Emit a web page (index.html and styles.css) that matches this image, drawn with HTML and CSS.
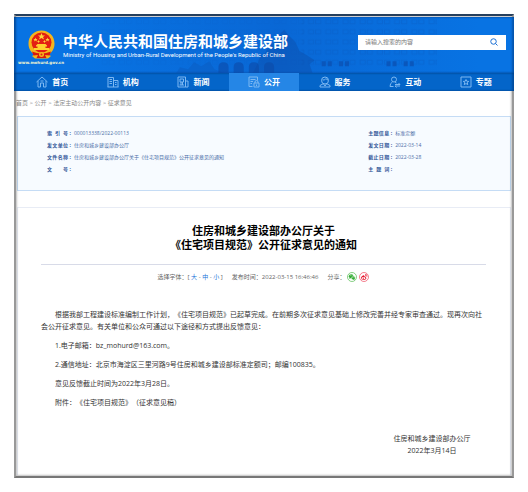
FILE: index.html
```html
<!DOCTYPE html>
<html lang="zh-CN">
<head>
    <meta charset="UTF-8">
    <meta name="viewport" content="width=device-width, initial-scale=1.0">
    <title>中华人民共和国住房和城乡建设部</title>
    <link rel="stylesheet" href="styles.css">
</head>
<body>
  <div class="page">
    <header class="header">
      <svg class="header-bg" viewBox="0 0 494 56" preserveAspectRatio="xMaxYMid slice" aria-hidden="true">
        <defs>
          <pattern id="windows" width="17" height="10" patternUnits="userSpaceOnUse">
            <path d="M2 3h5v4h-5zM9 3h5v4h-5z" fill="none" stroke="#0a55b8" stroke-width="1"/>
          </pattern>
          <linearGradient id="fade" x1="0" x2="1">
            <stop offset="0" stop-color="#0a5cc8" stop-opacity="0"/>
            <stop offset="0.5" stop-color="#0a5cc8" stop-opacity="0.5"/>
            <stop offset="1" stop-color="#0a5cc8" stop-opacity="0"/>
          </linearGradient>
        </defs>
        <rect x="60" width="400" height="56" fill="url(#fade)"/>
        <rect x="85" width="205" height="50" fill="url(#windows)" opacity="0.12"/>
        <rect x="284" y="2" width="134" height="50" fill="url(#windows)" opacity="0.3"/>
        <path d="M202 56v-6q0-5 5-5t5 5v6zM217 56v-6q0-5 5-5t5 5v6zM232 56v-6q0-5 5-5t5 5v6zM247 56v-6q0-5 5-5t5 5v6z" fill="#0b4aa8" opacity="0.6"/>
        <path d="M304 44h4v5h-4zM310 44h4v5h-4zM321 44h4v5h-4zM327 44h4v5h-4zM368 44h4v5h-4zM374 44h4v5h-4zM385 44h4v5h-4zM391 44h4v5h-4z" fill="#0b4aa8" opacity="0.6"/>
        <path d="M236 56l4-8 3-9 5-3 4-7 6-4 5-8 4-4 4 5 7 7 4 9 7 4 8 5-5 4 3 9z" fill="#0d4ba6" opacity="0.4"/>
        <path d="M160 56l4-6 8 2 6-7 7 4 8-5 5 8 10 4z" fill="#0d4ba6" opacity="0.25"/>
      </svg>
      <a class="brand" href="#">
        <span class="logo">
          <svg class="emblem" viewBox="0 0 54 58" aria-hidden="true">
            <path d="M27 1C12 1 1 12 1 27c0 11 5 18 12 22l-5 3 6 5h26l6-5-5-3c7-4 12-11 12-22C53 12 42 1 27 1z" fill="#f5b51c"/>
            <circle cx="27" cy="25" r="20" fill="#e31e12"/>
            <path d="M27 6l2 5h5l-4 3 2 5-5-3-5 3 2-5-4-3h5zM15 15l1 3h3l-2 2 1 3-3-2-3 2 1-3-2-2h3zM39 15l1 3h3l-2 2 1 3-3-2-3 2 1-3-2-2h3zM21 20l1 2h2l-2 2-1 2-1-2-2-2h2zM33 20l1 2h2l-2 2-1 2-1-2-2-2h2z" fill="#ffd83a"/>
            <path d="M16 31l3-3h16l3 3v2h-3v3h7v4H12v-4h7v-3h-3z" fill="#ffd02e"/>
            <path d="M8 43q19 8 38 0l-3 8-9-1 3 6H17l3-6-9 1z" fill="#d9180e"/>
            <circle cx="27" cy="49" r="5" fill="#f5b51c"/>
            <circle cx="27" cy="49" r="2" fill="#e31e12"/>
          </svg>
          <span class="domain">www.mohurd.gov.cn</span>
        </span>
        <span class="names">
          <span class="name-zh">中华人民共和国住房和城乡建设部</span>
          <span class="name-en">Ministry of Housing and Urban-Rural Development of the People's Republic of China</span>
        </span>
      </a>
      <form class="search">
        <input type="text" placeholder="请输入搜索的内容" aria-label="搜索">
        <button type="button" aria-label="搜索">
          <svg viewBox="0 0 16 16" fill="none" stroke="#1a6fd4" stroke-width="2"><circle cx="7" cy="7" r="5.5"/><path d="M11 11l4 4"/></svg>
        </button>
      </form>
    </header>
    <nav class="nav">
      <a href="#">
        <svg viewBox="0 0 24 24"><path d="M1 12L12 2l11 10M4 10v12h5v-8h6v8h5V10M9 10h6"/></svg>首页
      </a>
      <a href="#">
        <svg viewBox="0 0 24 24"><path d="M2 22V3h11v19M13 9h9v13M1 22h22M5 7h5M5 11h5M5 15h5M16 13h3M16 17h3"/></svg>机构
      </a>
      <a href="#">
        <svg viewBox="0 0 24 24"><path d="M2 2h15v20H2zM17 10h5v12h-5M6 6h7v6H6zM8 12v6M11 12v6M5 18h9"/></svg>新闻
      </a>
      <a href="#" class="active">
        <svg viewBox="0 0 24 24"><path d="M9 21H2V2h17v7M5 7h10M5 11h5M5 15h3M12 14h10v8H12zM14 14v-2q0-3 3-3t3 3v2M17 17v3"/></svg>公开
      </a>
      <a href="#">
        <svg viewBox="0 0 24 24"><circle cx="12" cy="9" r="7"/><path d="M7 8q5 1 7-3 1 3 4 3M9 15l-7 4v3h20v-3l-7-4M9 16l3 4 3-4"/></svg>服务
      </a>
      <a href="#">
        <svg viewBox="0 0 24 24"><circle cx="10" cy="7" r="5"/><path d="M7 12q-5 2-5 9h7M12 12l3 2M12 17h10l-3-3M22 20H12l3 3"/></svg>互动
      </a>
      <a href="#">
        <svg viewBox="0 0 24 24"><path d="M2 2h20v20H2zM12 7l1.500 3.500 4 .3-3 2.500 1 4-3.500-2.200-3.500 2.200 1-4-3-2.500 4-.3z"/></svg>专题
      </a>
    </nav>

    <div class="crumbs"><a href="#">首页</a> &gt; <a href="#">公开</a> &gt; <a href="#">法定主动公开内容</a> &gt; <a href="#">征求意见</a></div>

    <div class="index-box">
      <dl>
        <div><dt>索 引 号</dt><dd>000013338/2022-00113</dd></div>
        <div><dt>发文单位</dt><dd>住房和城乡建设部办公厅</dd></div>
        <div><dt>文件名称</dt><dd>住房和城乡建设部办公厅关于《住宅项目规范》公开征求意见的通知</dd></div>
        <div><dt>文 号</dt><dd></dd></div>
      </dl>
      <dl>
        <div><dt>主题信息</dt><dd>标准定额</dd></div>
        <div><dt>发文日期</dt><dd>2022-03-14</dd></div>
        <div><dt>截止日期</dt><dd>2022-03-28</dd></div>
        <div><dt>主 题 词</dt><dd></dd></div>
      </dl>
    </div>

    <main class="article">
      <h1>住房和城乡建设部办公厅关于<br>《住宅项目规范》公开征求意见的通知</h1>
      <div class="info">
        <span>选择字体：[ <a href="#">大</a> - <a href="#">中</a> - <a href="#">小</a> ]</span>
        <span>发布时间：2022-03-15 16:46:46</span>
        <span class="share">分享：
          <a href="#" aria-label="微信">
            <svg viewBox="0 0 30 30"><circle cx="15" cy="15" r="13.500" fill="#fff" stroke="#4cb848" stroke-width="2"/><ellipse cx="12.500" cy="12.500" rx="7" ry="6" fill="#35ad35"/><path d="M8 16l-1 5 5-3z" fill="#35ad35"/><ellipse cx="19" cy="18" rx="6" ry="5" fill="#35ad35" stroke="#fff"/><path d="M21 21l2 4-5-2z" fill="#35ad35"/><g fill="#fff"><circle cx="10" cy="11" r="1"/><circle cx="15" cy="11" r="1"/><circle cx="17" cy="17" r="1"/><circle cx="21" cy="17" r="1"/></g></svg>
          </a>
          <a href="#" aria-label="微博">
            <svg viewBox="0 0 30 30"><circle cx="15" cy="15" r="13.500" fill="#fff" stroke="#ee4056" stroke-width="2"/><path d="M6 18c0-4 6-9 9-8 1 1 1 2 0 3 3-1 5 0 4 2 7 3 1 9-5 9-4 0-8-2-8-6z" fill="#e6162d"/><ellipse cx="13.500" cy="18.500" rx="5" ry="3.500" fill="#fff"/><circle cx="13" cy="18.500" r="2" fill="#e6162d"/><path d="M18 7q7-1 6 7M18 10q3 0 3 3" fill="none" stroke="#e6162d" stroke-width="2"/></svg>
          </a>
        </span>
      </div>
      <div class="text">
        <p>根据我部工程建设标准编制工作计划，《住宅项目规范》已起草完成。在前期多次征求意见基础上修改完善并经专家审查通过。现再次向社会公开征求意见。有关单位和公众可通过以下途径和方式提出反馈意见：</p>
        <p>1.电子邮箱：bz_mohurd@163.com。</p>
        <p>2.通信地址：北京市海淀区三里河路9号住房和城乡建设部标准定额司；邮编100835。</p>
        <p>意见反馈截止时间为2022年3月28日。</p>
        <p>附件：《住宅项目规范》（征求意见稿）</p>
      </div>
      <div class="sign">
        <div>住房和城乡建设部办公厅</div>
        <div>2022年3月14日</div>
      </div>
    </main>
  </div>
</body>
</html>
```
FILE: styles.css
```css
* {
    box-sizing: border-box;
}
body {
    margin: 0;
    padding: 14px;
    background: #fff;
    color: #333;
    font-family: "Open Sans", "Noto Sans CJK SC", sans-serif;
    font-size: 7px;
    line-height: 12px;
    text-spacing-trim: space-all;
}
a {
    color: inherit;
    text-decoration: none;
}
.page {
    position: relative;
    padding: 3px;
    background: #fff;
}
/* bevelled frame over the page edges */
.page::after {
    content: "";
    position: absolute;
    inset: 0;
    border: 2px solid;
    border-color: #263f5c #999 #777 #999;
    box-shadow: inset 0 0 2px 1px rgba(0, 0, 0, 0.25);
    pointer-events: none;
}
.header, .nav {
    position: relative;
    z-index: 1;
    margin: 0 -3px;
    box-shadow: inset 2px 0 2px rgba(0, 40, 90, 0.5), inset -2px 0 2px rgba(0, 40, 90, 0.4);
}
.header {
    display: flex;
    align-items: center;
    justify-content: space-between;
    height: 56px;
    padding: 0 8px 0 5px;
    background: #0873e3;
}
.header-bg {
    position: absolute;
    inset: 0;
    width: 100%;
    height: 100%;
}
.brand {
    position: relative;
    display: flex;
    align-items: center;
    color: #fff;
}
.logo {
    display: flex;
    flex-direction: column;
    align-items: center;
    width: 44px;
    padding-top: 6px;
}
.emblem {
    width: 27px;
    height: 29px;
}
.domain {
    font-size: 4px;
    font-weight: bold;
    line-height: 8px;
    color: #f2f7d0;
    font-family: "DejaVu Sans", sans-serif;
}
.names {
    display: flex;
    flex-direction: column;
}
.name-zh {
    font-size: 15px;
    font-weight: bold;
    line-height: 18px;
}
.name-en {
    font-family: Roboto, Arial, sans-serif;
    font-size: 6px;
    line-height: 9px;
    white-space: nowrap;
}
.search {
    position: relative;
    display: flex;
    width: 148px;
    height: 15px;
    margin-bottom: 6px;
    background: #fff;
}
.search input {
    flex: 1;
    min-width: 0;
    padding: 0 7px;
    border: none;
    background: none;
    font-family: inherit;
    font-size: 6px;
}
.search input::placeholder {
    color: #777;
}
.search button {
    display: flex;
    align-items: center;
    justify-content: center;
    width: 25px;
    padding: 0;
    border: none;
    background: none;
}
.search svg {
    width: 8px;
    height: 8px;
}
.nav {
    display: flex;
    height: 18px;
    padding: 0 3px;
    background: #0465c9;
}
.nav a {
    flex: 1;
    display: flex;
    align-items: center;
    justify-content: center;
    gap: 4px;
    color: #fff;
    font-size: 8px;
    font-weight: bold;
}
.nav .active {
    background: #2586e6;
}
.nav svg {
    width: 12px;
    height: 12px;
    fill: none;
    stroke: #7db8f2;
    stroke-width: 2;
}
.crumbs {
    height: 25px;
    padding-top: 6px;
    margin-left: -1px;
    color: #888;
    font-size: 6px;
}
.index-box {
    display: flex;
    height: 75px;
    padding: 10px 29px;
    border: 1px solid #c5dcf5;
    background: #f7fbff;
    color: #4a6da7;
    font-size: 5px;
}
.index-box dl {
    flex: 1;
    margin: 0;
}
.index-box dl:first-child {
    flex: 0 0 74%;
}
.index-box dl div {
    display: flex;
    gap: 3px;
    height: 12px;
}
.index-box dt {
    position: relative;
    width: 24px;
    padding-right: 3px;
    color: #2f5597;
    font-weight: bold;
    text-align-last: justify;
}
.index-box dt::after {
    content: ":";
    position: absolute;
    right: 0;
}
.index-box dd {
    margin: 0;
}
.article {
    margin-top: 16px;
    padding: 16px 24px 18px 23px;
    border: 1px solid #e8ecf5;
    border-bottom: none;
}
h1 {
    margin: 0;
    padding-bottom: 12px;
    border-bottom: 1px solid #d8dbe8;
    color: #000;
    font-size: 11px;
    line-height: 14px;
    text-align: center;
}
.info {
    display: flex;
    justify-content: center;
    gap: 9px;
    margin-top: 6px;
    color: #666;
    font-size: 6px;
}
.info a {
    color: #1a73d9;
}
.share {
    display: flex;
    align-items: center;
    gap: 2px;
}
.share a {
    display: flex;
}
.share svg {
    width: 10px;
    height: 10px;
}
.text {
    margin-top: 26px;
}
.text p {
    margin: 0 0 7px;
    text-indent: 2em;
}
.sign {
    display: flex;
    flex-direction: column;
    align-items: center;
    width: 78px;
    margin: 24px 15px 0 auto;
}
```
